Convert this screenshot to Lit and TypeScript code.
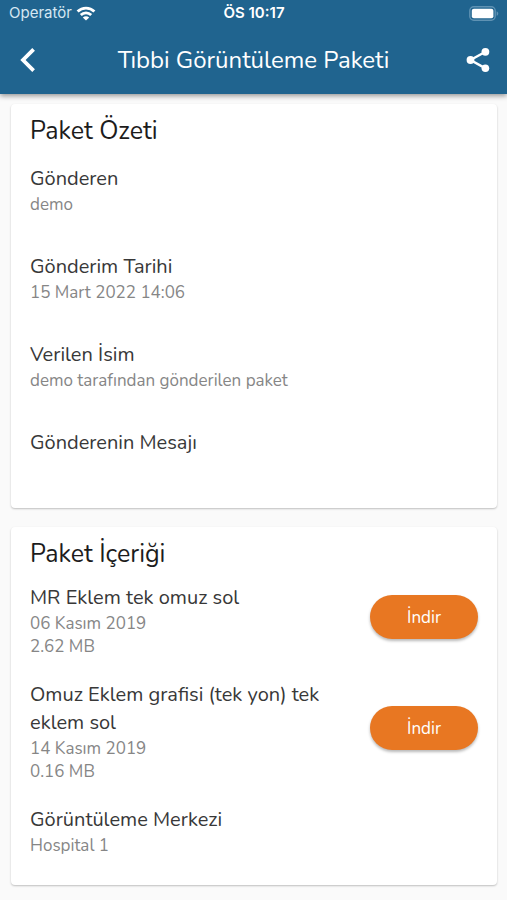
import { LitElement, html, css, nothing } from "lit";
import { customElement, property } from "lit/decorators.js";

interface Study {
  name: string;
  date: string;
  size: string;
}

const summary = [
  { label: "Gönderen", value: "demo" },
  { label: "Gönderim Tarihi", value: "15 Mart 2022 14:06" },
  { label: "Verilen İsim", value: "demo tarafından gönderilen paket" },
  { label: "Gönderenin Mesajı", value: "" },
];

const studies: Study[] = [
  { name: "MR Eklem tek omuz sol", date: "06 Kasım 2019", size: "2.62 MB" },
  { name: "Omuz Eklem grafisi (tek yon) tek eklem sol", date: "14 Kasım 2019", size: "0.16 MB" },
];

@customElement("status-bar")
export class StatusBar extends LitElement {
  static styles = css`
    :host {
      display: grid;
      grid-template-columns: 1fr auto 1fr;
      align-items: center;
      height: 26px;
      padding: 0 8px 0 9px;
      font: 15px/20px Inter, "Liberation Sans", sans-serif;
      color: #fff;
    }
    .carrier {
      display: flex;
      align-items: center;
      gap: 4px;
      color: #d6e7f2;
    }
    .time {
      font-weight: 600;
    }
    .battery {
      justify-self: end;
    }
    svg {
      display: block;
    }
  `;

  render() {
    return html`
      <span class="carrier">
        Operatör
        <svg width="20" height="15" viewBox="0 0 20 15" fill="none" stroke="#fff" stroke-width="2.8" aria-hidden="true">
          <path d="M1.6 5.6C6.3 0.9 13.7 0.9 18.4 5.6" />
          <path d="M4.8 9.1C7.7 6.2 12.3 6.2 15.2 9.1" />
          <path d="M10 14.6L6.8 11.4C8.6 9.7 11.4 9.7 13.2 11.4Z" fill="#fff" stroke="none" />
        </svg>
      </span>
      <span class="time">ÖS 10:17</span>
      <svg class="battery" width="30" height="15" viewBox="0 0 30 15" aria-hidden="true">
        <rect x="0.8" y="0.8" width="25.4" height="13.4" rx="4" fill="none" stroke="#5f92b3" stroke-width="1.4" />
        <rect x="2.8" y="2.8" width="21.6" height="9.4" rx="2" fill="#fff" />
        <path d="M27.6 5.2C29.8 6 29.8 9 27.6 9.8Z" fill="#5f92b3" />
      </svg>
    `;
  }
}

@customElement("info-field")
export class InfoField extends LitElement {
  @property() label = "";
  @property() value = "";

  static styles = css`
    :host {
      display: block;
    }
    dl,
    dd {
      margin: 0;
    }
    dt {
      font-size: 20px;
      line-height: 28px;
      color: var(--ink);
    }
    dd {
      min-height: 23px;
      font-size: 17px;
      line-height: 23px;
      color: var(--muted);
    }
  `;

  render() {
    return html`<dl><dt>${this.label}</dt><dd>${this.value || nothing}</dd></dl>`;
  }
}

@customElement("study-row")
export class StudyRow extends LitElement {
  @property({ attribute: false }) study!: Study;

  static styles = css`
    :host {
      display: flex;
      align-items: center;
      gap: 40px;
    }
    .text {
      flex: 1;
      min-width: 0;
    }
    h3,
    p {
      margin: 0;
      font-weight: 400;
    }
    h3 {
      font-size: 20px;
      line-height: 28px;
      color: var(--ink);
    }
    p {
      font-size: 17px;
      line-height: 23px;
      color: var(--muted);
    }
    button {
      flex: none;
      width: 108px;
      height: 44px;
      margin: 0 0 8px;
      padding: 0;
      border: 0;
      border-radius: 22px;
      background: #e87722;
      box-shadow: 0 2px 3px rgba(0, 0, 0, 0.28);
      color: #fff;
      font: inherit;
      font-size: 17px;
      cursor: pointer;
    }
  `;

  render() {
    return html`
      <div class="text">
        <h3>${this.study.name}</h3>
        <p>${this.study.date}</p>
        <p>${this.study.size}</p>
      </div>
      <button type="button">İndir</button>
    `;
  }
}

@customElement("app-root")
export class AppRoot extends LitElement {
  static styles = css`
    :host {
      --ink: #383838;
      --muted: #868686;
      display: block;
      box-sizing: border-box;
      min-height: 100vh;
      background: #fafafa;
      font-family: Nunito, Lato, "Noto Sans", sans-serif;
    }
    header {
      position: relative;
      background: #20648f;
      box-shadow: 0 2px 5px rgba(0, 0, 0, 0.4);
    }
    .bar {
      display: grid;
      grid-template-columns: 56px 1fr 56px;
      align-items: center;
      height: 68px;
    }
    h1 {
      margin: 0;
      font-size: 24px;
      line-height: 32px;
      font-weight: 400;
      text-align: center;
      color: #fff;
    }
    .icon {
      display: grid;
      place-items: center;
      height: 56px;
      padding: 0;
      border: 0;
      background: none;
      cursor: pointer;
    }
    main {
      display: flex;
      flex-direction: column;
      gap: 19px;
      padding: 10px 10px 15px 11px;
    }
    section {
      padding: 11px 19px 28px;
      border-radius: 4px;
      background: #fff;
      box-shadow: 0 1px 2px rgba(0, 0, 0, 0.24);
    }
    h2 {
      margin: 0;
      font-size: 25px;
      line-height: 32px;
      font-weight: 400;
      color: #1c1c1c;
    }
    .fields {
      display: grid;
      gap: 37px;
      margin-top: 18px;
    }
    .studies {
      display: grid;
      gap: 23px;
      margin-top: 14px;
    }
  `;

  render() {
    return html`
      <header>
        <status-bar></status-bar>
        <div class="bar">
          <button class="icon" type="button" aria-label="Geri">
            <svg width="16" height="24" viewBox="0 0 16 24" fill="none" stroke="#fff" stroke-width="3.8">
              <path d="M13.6 1.4L3 12L13.6 22.6" />
            </svg>
          </button>
          <h1>Tıbbi Görüntüleme Paketi</h1>
          <button class="icon" type="button" aria-label="Paylaş">
            <svg width="26" height="26" viewBox="0 0 26 26" fill="#fff">
              <path d="M19.5 4.8L4.5 13L19.5 21.4" fill="none" stroke="#fff" stroke-width="2.4" />
              <circle cx="19.4" cy="4.8" r="3.9" />
              <circle cx="4.5" cy="13" r="3.9" />
              <circle cx="19.4" cy="21.2" r="3.8" />
            </svg>
          </button>
        </div>
      </header>
      <main>
        <section>
          <h2>Paket Özeti</h2>
          <div class="fields">
            ${summary.map((f) => html`<info-field .label=${f.label} .value=${f.value}></info-field>`)}
          </div>
        </section>
        <section>
          <h2>Paket İçeriği</h2>
          <div class="studies">
            ${studies.map((s) => html`<study-row .study=${s}></study-row>`)}
            <info-field label="Görüntüleme Merkezi" value="Hospital 1"></info-field>
          </div>
        </section>
      </main>
    `;
  }
}
